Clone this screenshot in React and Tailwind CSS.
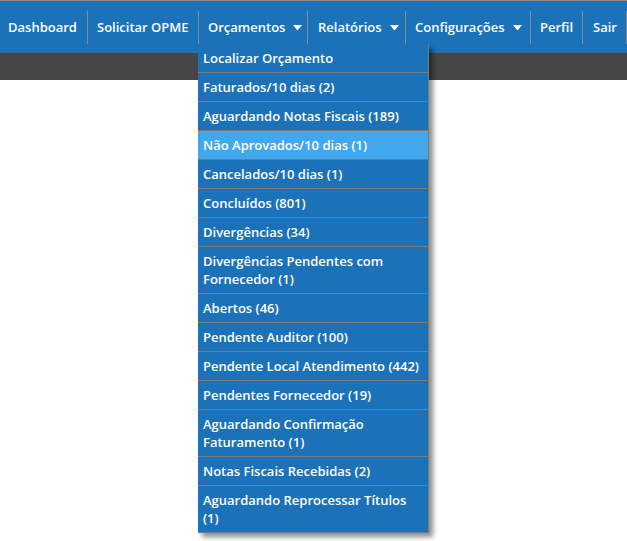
import React from "react";

const Caret = () => (
  <svg width="9" height="6" viewBox="0 0 9 6" className="ml-[8px] mt-[1px] shrink-0">
    <path d="M0 0 L9 0 L4.5 5.5 Z" fill="#ffffff" />
  </svg>
);

const Sep = () => <div className="w-px h-[33px] shrink-0 bg-[#7f8c99] self-start mt-[9px]" />;

const items = [
  ["Localizar Orçamento"],
  ["Faturados/10 dias (2)"],
  ["Aguardando Notas Fiscais (189)"],
  ["Não Aprovados/10 dias (1)", true],
  ["Cancelados/10 dias (1)"],
  ["Concluídos (801)"],
  ["Divergências (34)"],
  ["Divergências Pendentes com Fornecedor (1)"],
  ["Abertos (46)"],
  ["Pendente Auditor (100)"],
  ["Pendente Local Atendimento (442)"],
  ["Pendentes Fornecedor (19)"],
  ["Aguardando Confirmação Faturamento (1)"],
  ["Notas Fiscais Recebidas (2)"],
  ["Aguardando Reprocessar Títulos (1)"],
];

export default function App() {
  return (
    <div className="relative min-h-[541px] bg-white font-['Open_Sans',sans-serif] text-[13px] font-semibold text-white">
      <nav className="flex h-[53px] items-stretch whitespace-nowrap border-t border-[#8c8c8c] bg-[#1c72b9] pt-[1px]">
        <a className="flex w-[87px] shrink-0 items-center pl-[8px]">Dashboard</a>
        <Sep />
        <a className="flex w-[110px] shrink-0 items-center pl-[9px]">Solicitar OPME</a>
        <Sep />
        <div className="relative flex w-[108px] shrink-0 items-center pl-[9px]">
          <span>Orçamentos</span>
          <Caret />
          <ul className="absolute left-[-1px] top-[42px] z-10 w-[231px] whitespace-normal border-r border-b border-[#7a7a7a] bg-[#1c72b9] shadow-[4px_4px_5px_rgba(0,0,0,0.45)]">
            {items.map(([label, active], i) => (
              <li
                key={i}
                className={`px-[5px] py-[5px] leading-[18px] ${
                  i < items.length - 1 ? "border-b border-[#7a7a7a]" : ""
                } ${active ? "bg-[#42a8ee]" : ""}`}
              >
                {label}
              </li>
            ))}
          </ul>
        </div>
        <Sep />
        <div className="flex w-[97px] shrink-0 items-center pl-[10px]">
          <span>Relatórios</span>
          <Caret />
        </div>
        <Sep />
        <div className="flex w-[124px] shrink-0 items-center pl-[9px]">
          <span>Configurações</span>
          <Caret />
        </div>
        <Sep />
        <a className="flex w-[51px] shrink-0 items-center pl-[9px]">Perfil</a>
        <Sep />
        <a className="flex w-[43px] shrink-0 items-center pl-[10px]">Sair</a>
        <Sep />
      </nav>
      <div className="h-[27px] bg-[#464646]" />
    </div>
  );
}
